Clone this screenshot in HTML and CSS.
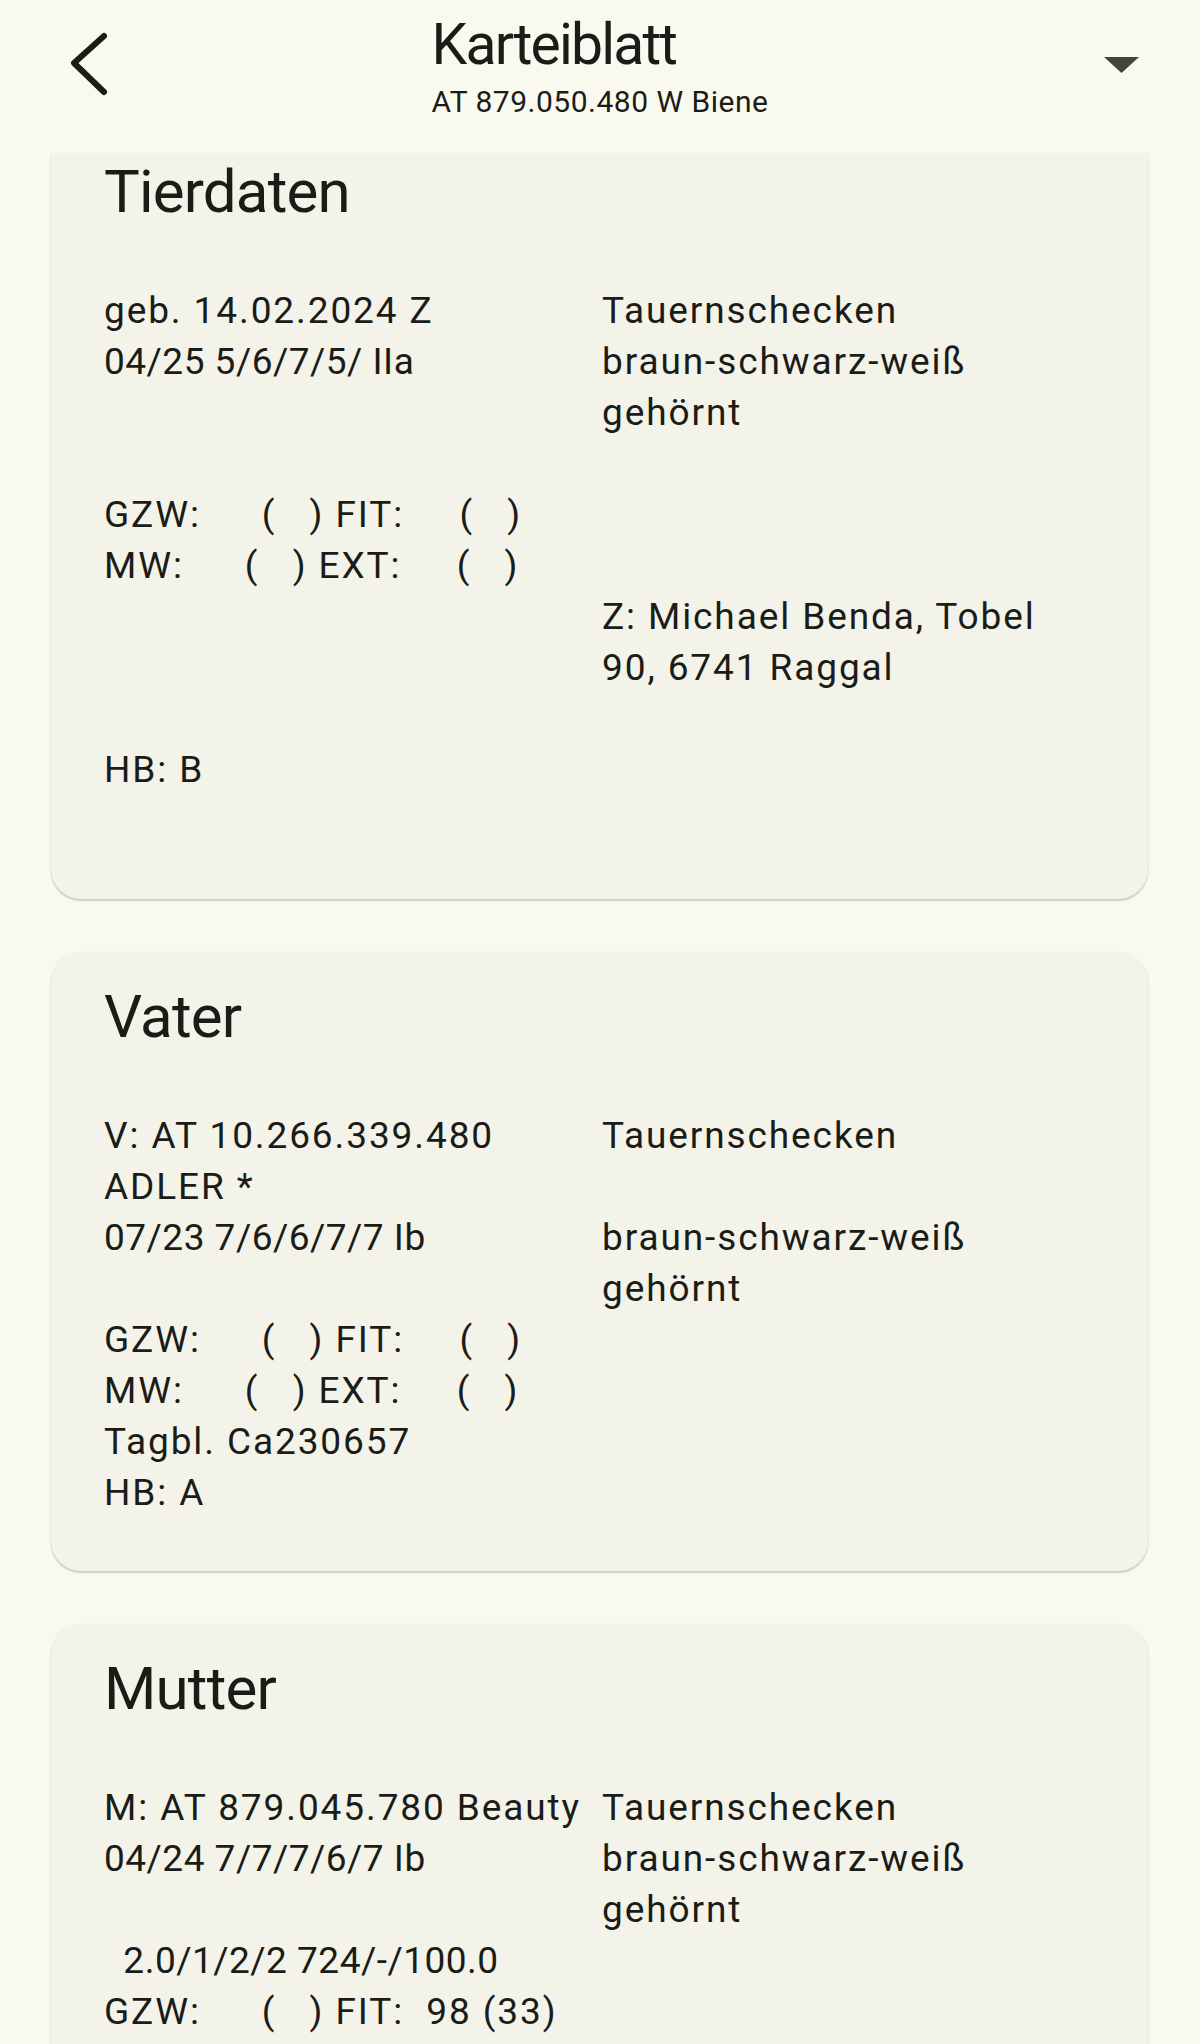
FILE: index.html
```html
<!DOCTYPE html>
<html lang="de">

<head>
    <meta charset="utf-8">
    <meta name="viewport" content="width=device-width, initial-scale=1.0">
    <title>Karteiblatt</title>
    <link rel="stylesheet" href="styles.css">
</head>

<body>
    <header class="kopf">
        <div class="zurueck">
            <svg width="46" height="72" viewBox="0 0 46 72">
                <polyline points="38,8 8,35 38,64" fill="none" stroke="#1b1c17" stroke-width="6" stroke-linecap="round" stroke-linejoin="round" />
            </svg>
        </div>
        <div class="titel">
            <h1>Karteiblatt</h1>
            <p>AT 879.050.480 W Biene</p>
        </div>
        <div class="auswahl">
            <svg width="36" height="18" viewBox="0 0 36 18">
                <polygon points="0,1 35,1 17.5,17" fill="#42453c" />
            </svg>
        </div>
    </header>

    <main class="inhalt">
        <section class="karte">
            <h2>Tierdaten</h2>
            <div class="zeilen">
                <div>geb. 14.02.2024 Z</div>
                <div>Tauernschecken</div>
                <div class="noten">04/25 5/6/7/5/ IIa</div>
                <div>braun-schwarz-weiß<br>gehörnt</div>
                <div class="leer"></div>
                <div>GZW:     &#8202;(   ) FIT:     (   )</div>
                <div></div>
                <div>MW:     &#8202;(   ) EXT:     (   )</div>
                <div></div>
                <div></div>
                <div>Z: Michael Benda, Tobel<br>90, 6741 Raggal</div>
                <div class="leer"></div>
                <div>HB: B</div>
                <div></div>
                <div class="leer"></div>
            </div>
        </section>

        <section class="karte">
            <h2>Vater</h2>
            <div class="zeilen">
                <div>V: AT 10.266.339.480<br>ADLER *</div>
                <div>Tauernschecken</div>
                <div class="noten">07/23 7/6/6/7/7 Ib</div>
                <div>braun-schwarz-weiß<br>gehörnt</div>
                <div>GZW:     &#8202;(   ) FIT:     (   )</div>
                <div></div>
                <div>MW:     &#8202;(   ) EXT:     (   )</div>
                <div></div>
                <div>Tagbl. Ca230657</div>
                <div></div>
                <div>HB: A</div>
                <div></div>
            </div>
        </section>

        <section class="karte">
            <h2>Mutter</h2>
            <div class="zeilen">
                <div>M: AT 879.045.780 Beauty</div>
                <div>Tauernschecken</div>
                <div class="noten">04/24 7/7/7/6/7 Ib</div>
                <div>braun-schwarz-weiß<br>gehörnt</div>
                <div class="noten">  2.0/1/2/2 724/-/100.0</div>
                <div></div>
                <div>GZW:     &#8202;(   ) FIT:  98 (33)</div>
                <div></div>
            </div>
        </section>
    </main>
</body>

</html>
```

FILE: styles.css
```css
body {
    margin: 0;
    background-color: #f9f9ef;
    color: #1b1c17;
    font-family: Roboto, "Noto Sans", sans-serif;
}

/* KOPF */

.kopf {
    position: fixed;
    top: 0;
    left: 0;
    right: 0;
    z-index: 2;
    height: 153px;
    display: grid;
    grid-template-columns: 1fr auto 1fr;
    background-color: #f9f9ef;
}

.zurueck {
    padding-left: 66px;
    padding-top: 28px;
}

.titel {
    padding-top: 12px;
}

.titel h1 {
    margin: 0;
    font-size: 57px;
    line-height: 66px;
    font-weight: 400;
    letter-spacing: -1.8px;
}

.titel p {
    margin: 6px 0 0;
    font-size: 30px;
    line-height: 36px;
    letter-spacing: 0.5px;
}

.auswahl {
    justify-self: end;
    padding-right: 60px;
    padding-top: 56px;
}

/* KARTEN */

.inhalt {
    padding: 127px 52px 0 51px;
}

.karte {
    background-color: #f3f3e9;
    border-radius: 30px;
    padding: 30px 53px 53px;
    margin-bottom: 53px;
    box-shadow: 0 2px 2px rgba(0, 0, 0, 0.18), 0 0 2px rgba(0, 0, 0, 0.06);
}

.karte h2 {
    margin: 0;
    font-size: 60px;
    line-height: 70px;
    font-weight: 400;
    letter-spacing: -0.8px;
}

.zeilen {
    margin-top: 58px;
    display: grid;
    grid-template-columns: 498px 1fr;
    font-size: 37px;
    line-height: 51px;
    letter-spacing: 1.9px;
}

.zeilen div {
    white-space: pre;
}

/* schmalere Schraegstriche in den Notenzeilen */
.zeilen .noten {
    letter-spacing: 0.5px;
}

.zeilen .leer {
    grid-column: 1 / 3;
    height: 51px;
}
```
